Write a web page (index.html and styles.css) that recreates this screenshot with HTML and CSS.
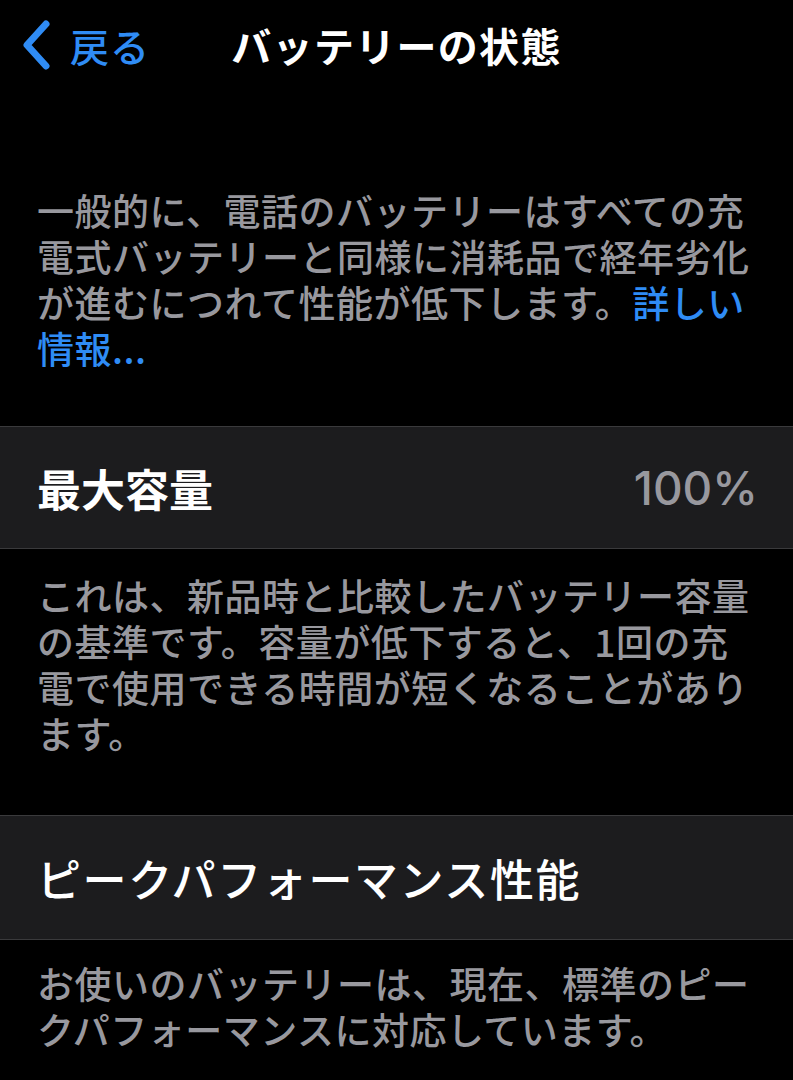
FILE: index.html
```html
<!DOCTYPE html>
<html lang="ja">
<head>
<meta charset="utf-8">
<link rel="stylesheet" href="styles.css">
</head>
<body>
<div class="screen">
  <header class="nav">
    <a class="back">
      <svg class="chev" width="34" height="50" viewBox="0 0 34 50"><path d="M28 4 L9 25 L28 46" fill="none" stroke="#2f8cf5" stroke-width="7" stroke-linecap="round" stroke-linejoin="round"/></svg>
      <span class="back-label">戻る</span>
    </a>
    <h1 class="title">バッテリーの状態</h1>
    <span></span>
  </header>

  <p class="note intro">一般的に、電話のバッテリーはすべての充電式バッテリーと同様に消耗品で経年劣化が進むにつれて性能が低下します。<span class="link">詳しい情報...</span></p>

  <div class="cell">
    <span class="cell-label">最大容量</span>
    <span class="cell-value">100%</span>
  </div>
  <p class="note footer">これは、新品時と比較したバッテリー容量の基準です。容量が低下すると、1回の充電で使用できる時間が短くなることがあります。</p>

  <div class="cell cell-second">
    <span class="cell-label medium">ピークパフォーマンス性能</span>
  </div>
  <p class="note footer footer-last">お使いのバッテリーは、現在、標準のピークパフォーマンスに対応しています。</p>
</div>
</body>
</html>
```

FILE: styles.css
```css
html, body {
  margin: 0;
  padding: 0;
  background: #000;
}
body {
  font-family: "Noto Sans CJK JP", "Noto Sans", sans-serif;
  color: #fff;
  width: 793px;
  height: 1080px;
  overflow: hidden;
}
.screen {
  display: flex;
  flex-direction: column;
}
.nav {
  height: 90px;
  display: grid;
  grid-template-columns: 1fr auto 1fr;
  align-items: center;
}
.back {
  display: flex;
  align-items: center;
  gap: 18px;
  padding-left: 18px;
  color: #2f8cf5;
}
.chev {
  display: block;
}
.back-label {
  font-size: 39px;
  font-weight: 500;
  line-height: 1;
  letter-spacing: 1px;
}
.title {
  margin: 0;
  font-size: 40px;
  font-weight: 700;
  line-height: 1;
  letter-spacing: 1.3px;
  color: #fff;
}
.note {
  margin: 0;
  padding: 0 36px 0 37px;
  font-size: 37px;
  font-weight: 500;
  line-height: 46px;
  letter-spacing: 0.5px;
  color: #98989e;
}
.intro {
  margin-top: 97px;
}
.link {
  color: #2f8cf5;
}
.cell {
  margin-top: 55px;
  height: 121px;
  background: #1c1c1e;
  border-top: 1px solid #3a3a3c;
  border-bottom: 1px solid #3a3a3c;
  display: flex;
  align-items: center;
  justify-content: space-between;
  padding: 0 35px 0 37px;
}
.cell-second {
  margin-top: 59px;
  height: 123px;
}
.cell-label {
  font-size: 44px;
  font-weight: 700;
  color: #fff;
  line-height: 1;
}
.cell-label.medium {
  font-weight: 500;
  letter-spacing: 1.6px;
}
.cell-value {
  font-family: Inter, "Noto Sans", sans-serif;
  font-size: 46px;
  font-weight: 500;
  color: #98989e;
  line-height: 1;
}
.footer {
  margin-top: 23px;
}
.footer-last {
  margin-top: 20px;
}
```
